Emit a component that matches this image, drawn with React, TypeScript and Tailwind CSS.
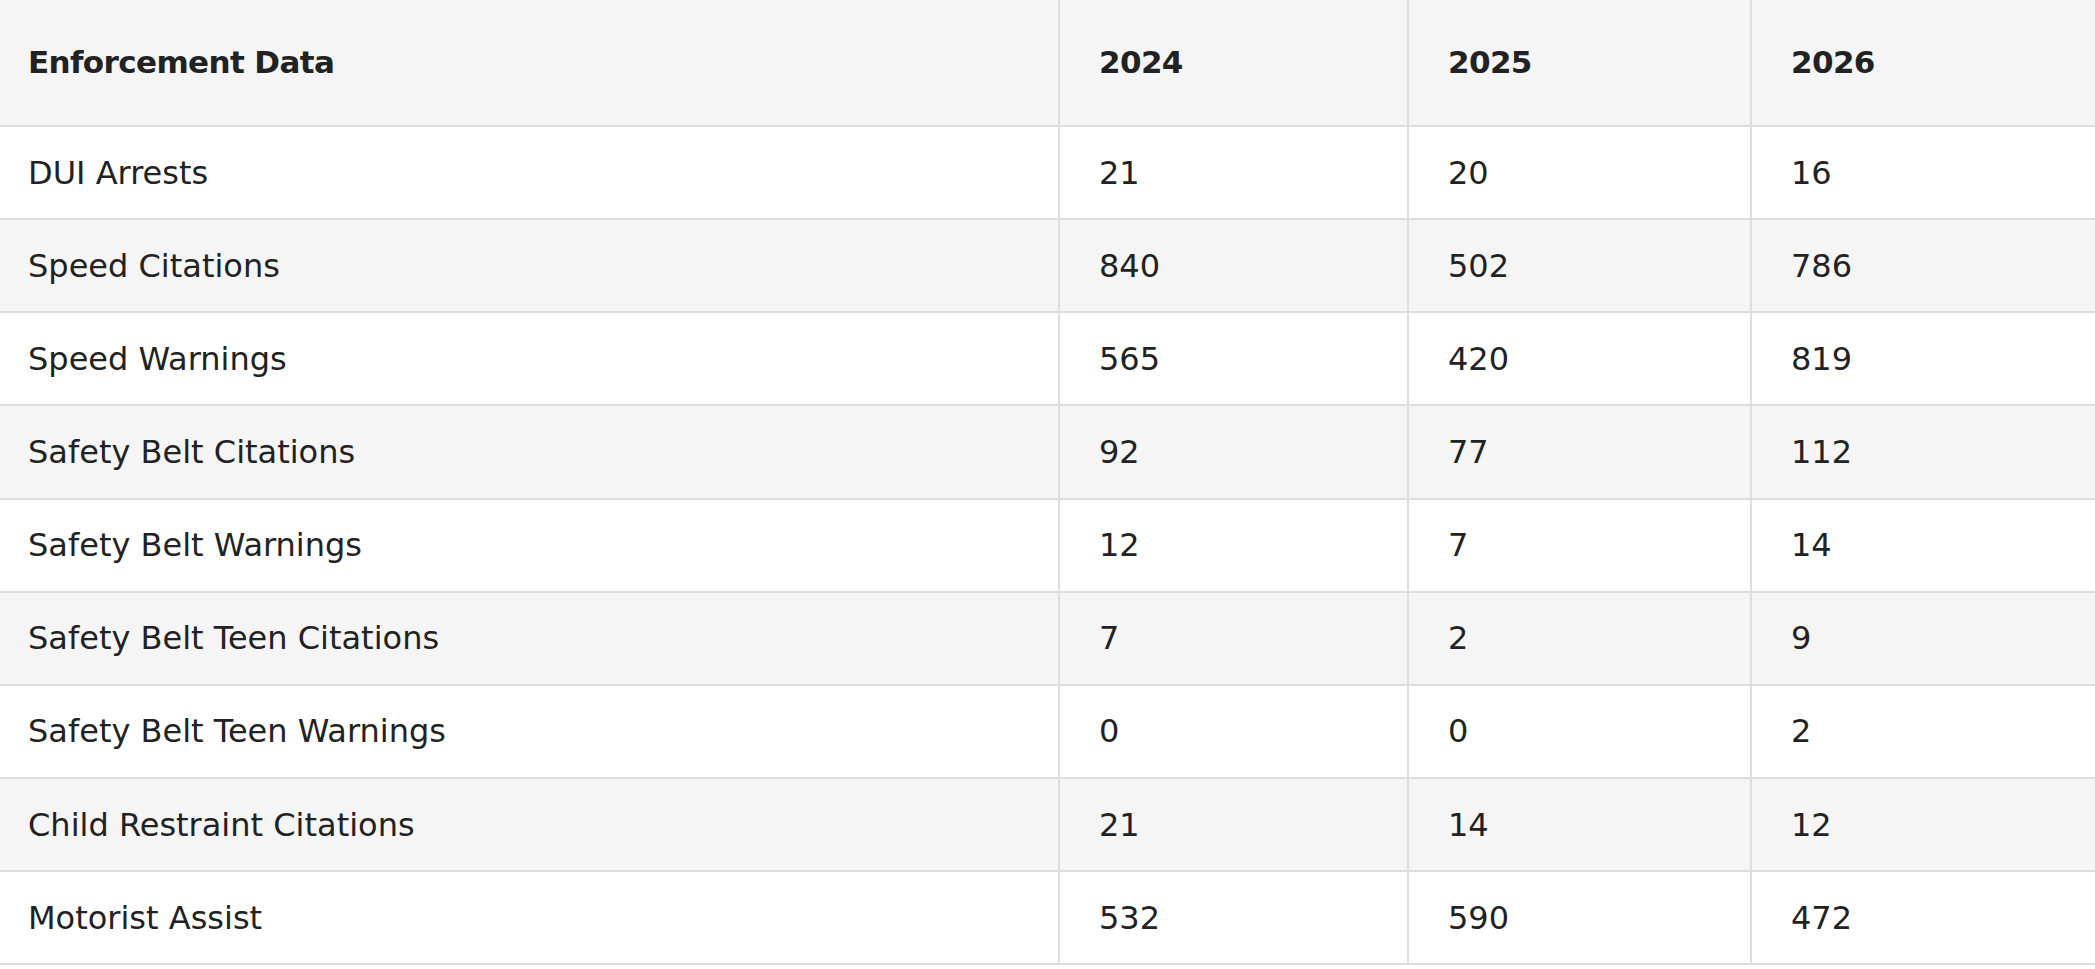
const rows: [string, string, string, string][] = [
  ["DUI Arrests", "21", "20", "16"],
  ["Speed Citations", "840", "502", "786"],
  ["Speed Warnings", "565", "420", "819"],
  ["Safety Belt Citations", "92", "77", "112"],
  ["Safety Belt Warnings", "12", "7", "14"],
  ["Safety Belt Teen Citations", "7", "2", "9"],
  ["Safety Belt Teen Warnings", "0", "0", "2"],
  ["Child Restraint Citations", "21", "14", "12"],
  ["Motorist Assist", "532", "590", "472"],
];

const headers = ["Enforcement Data", "2024", "2025", "2026"];

export default function App() {
  return (
    <div className="w-[2095px] h-[969px] bg-white text-[#222] font-['DejaVu_Sans',sans-serif]">
      <table className="w-full border-collapse table-fixed">
        <colgroup>
          <col className="w-[1059px]" />
          <col className="w-[349px]" />
          <col className="w-[343px]" />
          <col />
        </colgroup>
        <thead>
          <tr className="bg-[#f5f5f5] h-[126px] border-b-2 border-[#dddddd]">
            {headers.map((h, i) => (
              <th
                key={h}
                className={`text-left font-bold text-[31px] tracking-[-0.02em] ${i === 0 ? "pl-[28px]" : "pl-[39px]"} ${i < 3 ? "border-r-2 border-[#dddddd]" : ""}`}
              >
                {h}
              </th>
            ))}
          </tr>
        </thead>
        <tbody>
          {rows.map((r, ri) => (
            <tr
              key={r[0]}
              className={`h-[93.15px] border-b-2 border-[#dddddd] ${ri % 2 === 1 ? "bg-[#f5f5f5]" : "bg-white"}`}
            >
              {r.map((c, i) => (
                <td
                  key={i}
                  className={`text-[32px] ${i === 0 ? "pl-[28px]" : "pl-[39px]"} ${i < 3 ? "border-r-2 border-[#dddddd]" : ""}`}
                >
                  {c}
                </td>
              ))}
            </tr>
          ))}
        </tbody>
      </table>
    </div>
  );
}
